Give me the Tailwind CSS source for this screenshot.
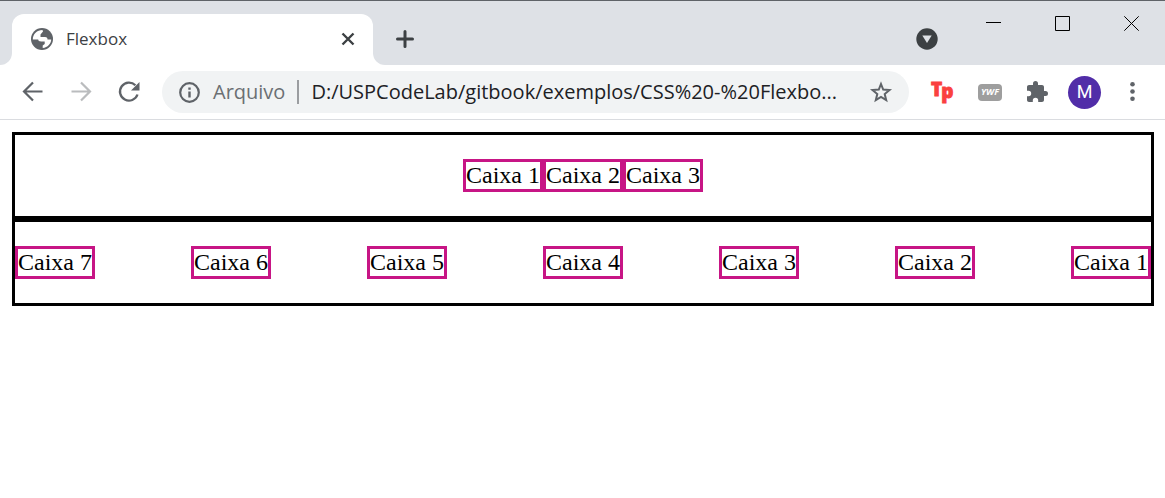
<!DOCTYPE html>
<html lang="pt-BR">
<head>
<meta charset="utf-8">
<meta name="viewport" content="width=device-width, initial-scale=1">
<title>Flexbox</title>
<script src="https://cdn.jsdelivr.net/npm/@tailwindcss/browser@4"></script>
</head>
<body class="min-h-screen bg-white font-['Open_Sans',sans-serif]">
<header class="border-b border-[#dadce0] bg-white">
  <div class="flex h-[65px] border-t border-[#5f6368] bg-[#dee1e6]">
    <div class="flex w-3 items-end bg-white"><div class="h-full w-full rounded-br-xl bg-[#dee1e6]"></div></div>
    <div class="flex w-[361px] flex-col bg-[#dee1e6] pt-[13px]">
      <div class="flex flex-1 items-center rounded-t-xl bg-white pr-4 pb-0.5 pl-[18px]">
        <svg class="size-6 shrink-0" viewBox="0 0 24 24" aria-hidden="true"><circle cx="12" cy="12" r="11" fill="#5f6368"/><path fill="#fff" d="M2.800 12.500C2.800 7 7 3 12.500 3L13 4.500 10.500 7.500V10H15c2 0 2.500 1.300 2.500 2.500h3.700c0 4-3.500 8-8.500 8.500v-2.500l2-1.500v-2.500h-3.500c-2 0-3-.7-3-2z"/></svg>
        <span class="ml-3 flex-1 text-[17px] text-[#3c4043]">Flexbox</span>
        <button type="button" class="size-[18px]" aria-label="Fechar guia"><svg viewBox="0 0 18 18" fill="none" stroke="#3c4043" stroke-width="2.400"><path d="M3.500 3.500l11 11M14.500 3.500l-11 11"/></svg></button>
      </div>
    </div>
    <div class="flex flex-1 bg-white"><div class="flex flex-1 rounded-bl-xl bg-[#dee1e6] pt-[13px]">
      <button type="button" class="ml-5 flex h-[50px] w-6 items-center" aria-label="Nova guia"><svg viewBox="0 0 24 24" fill="none" stroke="#3c4043" stroke-width="3" stroke-linecap="round"><path d="M12 4.500v15M4.500 12h15"/></svg></button>
      <div class="flex-1"></div>
      <button type="button" class="mr-[47px] flex h-[50px] w-6 items-center" aria-label="Pesquisar guias"><svg viewBox="0 0 24 24"><circle cx="12" cy="12" r="10.700" fill="#3c4043"/><path fill="#dee1e6" d="M7.300 8.500h9.400L12 16z"/></svg></button>
    </div></div>
    <div class="flex items-start gap-[54px] bg-[#dee1e6] pt-[15px] pr-[26px]">
      <button type="button" class="size-[15px]" aria-label="Minimizar"><svg viewBox="0 0 15 15" stroke="#000"><path d="M0 6.500h15"/></svg></button>
      <button type="button" class="size-[15px]" aria-label="Maximizar"><svg viewBox="0 0 15 15" stroke="#000" fill="none"><path d="M.5.5h14v14H.5z"/></svg></button>
      <button type="button" class="size-[15px]" aria-label="Fechar"><svg viewBox="0 0 15 15" stroke="#000" fill="none"><path d="M.3.300l14.400 14.400M14.700.300L.3 14.700"/></svg></button>
    </div>
  </div>
  <div class="flex h-[54px] items-center pr-5 pl-[21px]">
    <nav class="flex gap-6" aria-label="Navegação">
      <button type="button" class="size-6" aria-label="Voltar"><svg viewBox="0 0 24 24" fill="none" stroke="#5f6368" stroke-width="2.200"><path d="M21.500 11.500H3.500M12 2.500l-9 9 9 9"/></svg></button>
      <button type="button" class="size-6" aria-label="Avançar"><svg viewBox="0 0 24 24" fill="none" stroke="#babcbe" stroke-width="2.200"><path d="M2.500 11.500h18M12 2.500l9 9-9 9"/></svg></button>
      <button type="button" class="size-6" aria-label="Recarregar"><svg viewBox="0 0 24 24"><path d="M20.500 14.500A9 9 0 1 1 18.400 5.300" fill="none" stroke="#5f6368" stroke-width="2.300"/><path fill="#5f6368" d="M22.500 2v8.500H14z"/></svg></button>
    </nav>
    <div class="ml-[21px] flex h-[42px] min-w-0 flex-1 items-center rounded-full bg-[#f1f3f4] px-4">
      <svg class="size-6 shrink-0" viewBox="0 0 24 24" aria-hidden="true"><circle cx="11.500" cy="12.500" r="9.300" fill="none" stroke="#5f6368" stroke-width="2.200"/><path fill="#5f6368" d="M10.300 11.500h2.400v6h-2.400zM10.300 7.500h2.400v2.300h-2.400z"/></svg>
      <label for="url" class="ml-[11px] text-xl text-[#6b6f73]">Arquivo</label>
      <div class="mr-3 ml-3 h-6 w-0.5 bg-[#9b9da0]"></div>
      <input id="url" type="text" class="min-w-0 flex-1 text-xl text-[#202124] outline-none" value="D:/USPCodeLab/gitbook/exemplos/CSS%20-%20Flexbo...">
      <button type="button" class="ml-2 size-6 shrink-0" aria-label="Favoritar"><svg viewBox="0 0 24 24" fill="none" stroke="#5f6368" stroke-width="2"><path d="M12 4l2.200 5.600 6.300.500-4.800 4 1.500 6-5.200-3.200-5.200 3.200 1.500-6-4.800-4 6.300-.5z"/></svg></button>
    </div>
    <div class="flex items-center">
      <button type="button" class="ml-[21px] h-6 w-[26px]" aria-label="Tp"><svg class="overflow-visible" viewBox="0 0 26 24" fill="#fa413e" stroke="#fa413e" stroke-width="0.800" font-family="Open Sans" font-weight="800" font-size="19"><text x="1" y="16">T<tspan dx="-1" dy="2">p</tspan></text></svg></button>
      <button type="button" class="ml-[22px] flex h-[17px] w-6 items-center justify-center rounded bg-[#9e9e9e] text-[9px] leading-3 font-bold text-white italic">YWF</button>
      <button type="button" class="ml-[23px] size-6" aria-label="Extensões"><svg viewBox="0 0 24 24" fill="#5f6368"><path d="M20.500 11H19V7c0-1.100-.9-2-2-2h-4V3.500a2.500 2.500 0 0 0-5 0V5H4c-1.100 0-2 .9-2 2v3.800h1.500a2.700 2.700 0 0 1 0 5.400H2V20c0 1.100.9 2 2 2h3.800v-1.500a2.700 2.700 0 0 1 5.400 0V22H17c1.100 0 2-.9 2-2v-4h1.500a2.500 2.500 0 0 0 0-5z"/></svg></button>
      <button type="button" class="ml-[19px] size-[33px] rounded-full bg-[#512da8] font-['Roboto',sans-serif] text-lg text-white" aria-label="Perfil M">M</button>
      <button type="button" class="ml-5 size-6" aria-label="Menu"><svg viewBox="0 0 24 24" fill="#5f6368"><circle cx="11.500" cy="4.300" r="2.300"/><circle cx="11.500" cy="11.500" r="2.300"/><circle cx="11.500" cy="18.700" r="2.300"/></svg></button>
    </div>
  </div>
</header>
<main class="mt-3 mr-[11px] ml-3 font-['Liberation_Serif',serif] text-2xl leading-[27px] text-black">
  <section class="flex justify-center border-3 border-black py-6">
    <div class="w-20 border-3 border-[#c71585] whitespace-nowrap">Caixa 1</div>
    <div class="w-20 border-3 border-[#c71585] whitespace-nowrap">Caixa 2</div>
    <div class="w-20 border-3 border-[#c71585] whitespace-nowrap">Caixa 3</div>
  </section>
  <section class="flex flex-row-reverse justify-between border-3 border-black py-6">
    <div class="w-20 border-3 border-[#c71585] whitespace-nowrap">Caixa 1</div>
    <div class="w-20 border-3 border-[#c71585] whitespace-nowrap">Caixa 2</div>
    <div class="w-20 border-3 border-[#c71585] whitespace-nowrap">Caixa 3</div>
    <div class="w-20 border-3 border-[#c71585] whitespace-nowrap">Caixa 4</div>
    <div class="w-20 border-3 border-[#c71585] whitespace-nowrap">Caixa 5</div>
    <div class="w-20 border-3 border-[#c71585] whitespace-nowrap">Caixa 6</div>
    <div class="w-20 border-3 border-[#c71585] whitespace-nowrap">Caixa 7</div>
  </section>
</main>
</body>
</html>
